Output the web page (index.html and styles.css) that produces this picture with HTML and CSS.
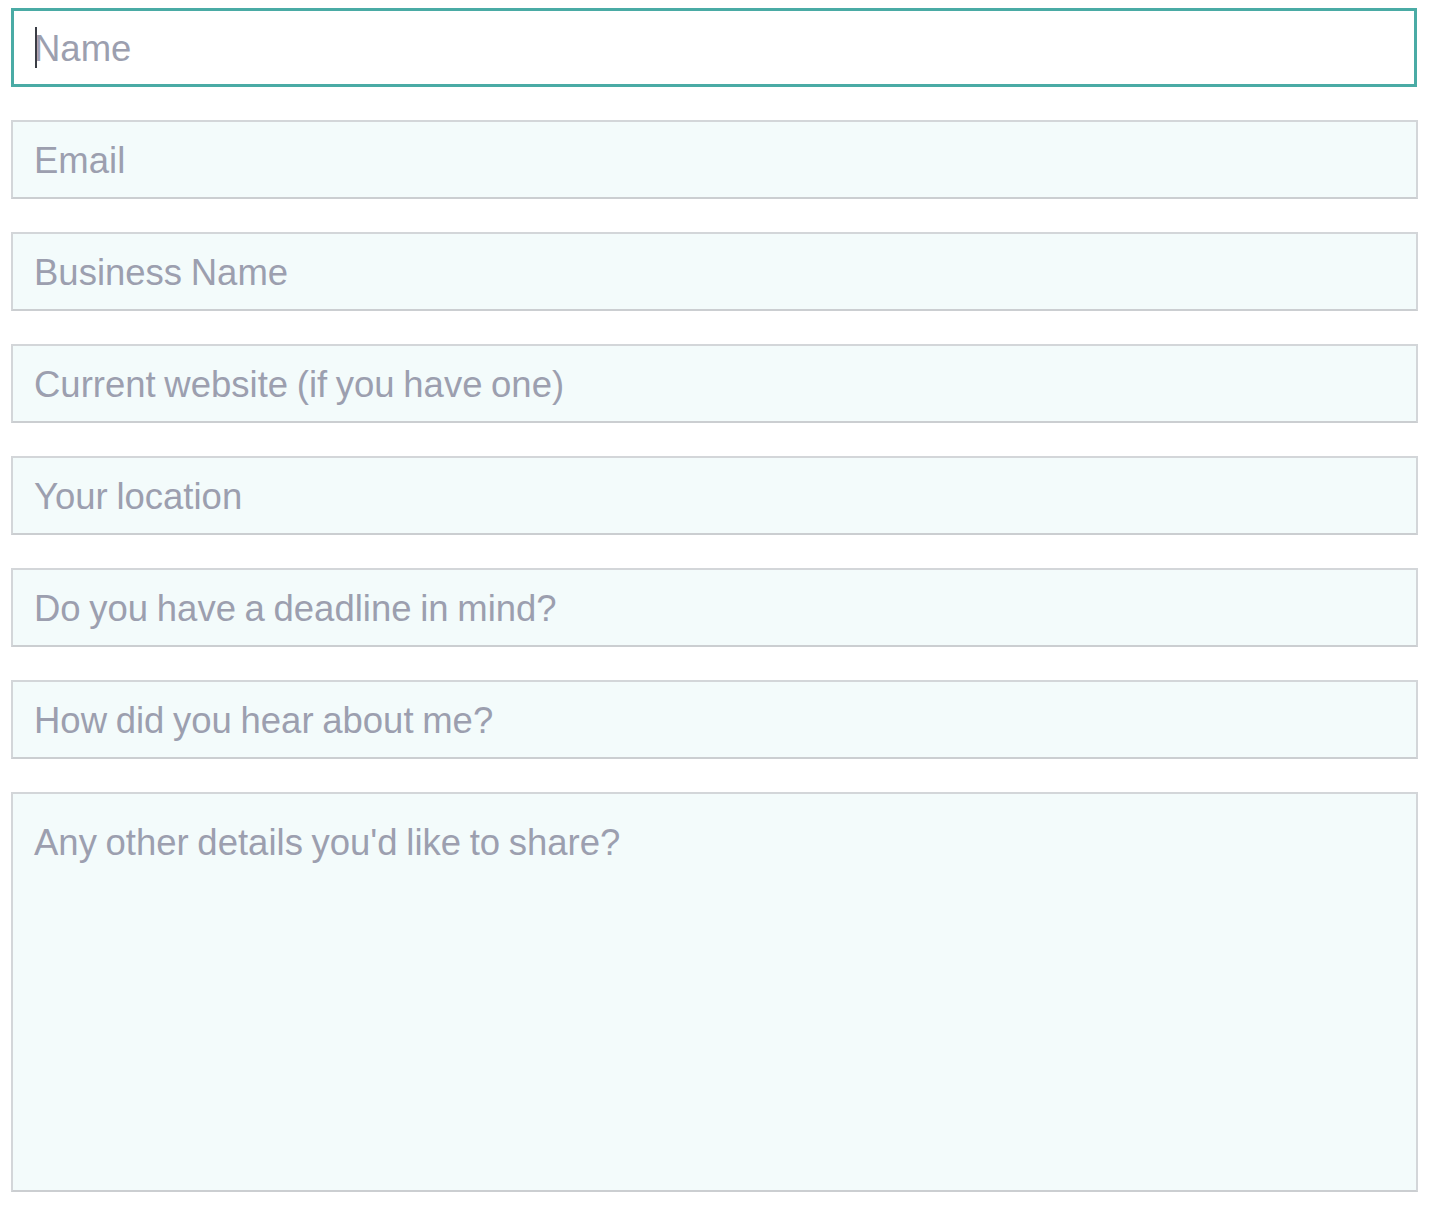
FILE: index.html
```html
<!DOCTYPE html>
<html>
<head>
<meta charset="utf-8">
<link rel="stylesheet" href="styles.css">
</head>
<body>
<form class="form">
  <div class="field field-focus">
    <input class="input input-focus" type="text" placeholder="Name">
    <span class="caret"></span>
  </div>
  <input class="input" type="email" placeholder="Email">
  <input class="input" type="text" placeholder="Business Name">
  <input class="input" type="text" placeholder="Current website (if you have one)">
  <input class="input" type="text" placeholder="Your location">
  <input class="input" type="text" placeholder="Do you have a deadline in mind?">
  <input class="input" type="text" placeholder="How did you hear about me?">
  <textarea class="input textarea" placeholder="Any other details you'd like to share?"></textarea>
</form>
</body>
</html>
```
FILE: styles.css
```css
html, body {
  margin: 0;
  padding: 0;
  background: #ffffff;
}
.form {
  display: flex;
  flex-direction: column;
  gap: 33px;
  padding: 8px 14px 0 11px;
  width: 1407px;
}
.field {
  position: relative;
  display: flex;
}
.field-focus {
  margin-right: 1px;
}
.input {
  box-sizing: border-box;
  height: 79px;
  width: 100%;
  margin: 0;
  border: 2px solid #d3d6d9;
  border-bottom-color: #cbced1;
  background: #f3fbfb;
  padding: 2px 20px 0 21px;
  font-family: "Liberation Sans", Arial, sans-serif;
  font-size: 36.5px;
  word-spacing: -1.5px;
  color: #555a66;
  outline: none;
  border-radius: 0;
}
.input::placeholder {
  color: #9c9faf;
  opacity: 1;
}
.input-focus {
  border: 3px solid #4aaba5;
  background: #ffffff;
  padding-left: 20px;
}
.caret {
  position: absolute;
  left: 24px;
  top: 19px;
  width: 2px;
  height: 41px;
  background: #3a3d45;
}
.textarea {
  height: 400px;
  padding-top: 28px;
  resize: none;
  line-height: 1.15;
  display: block;
}
```
